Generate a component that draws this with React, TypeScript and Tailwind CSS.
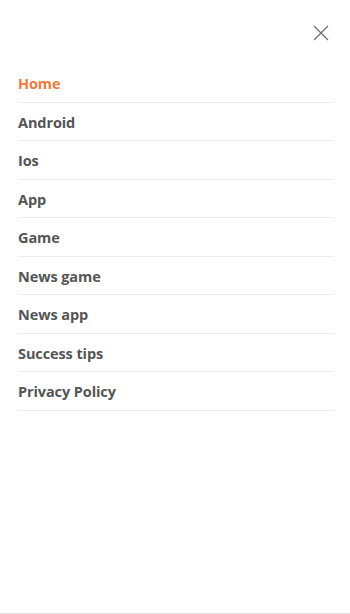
import React from "react";

const items = ["Home", "Android", "Ios", "App", "Game", "News game", "News app", "Success tips", "Privacy Policy"];

export default function App() {
  return (
    <div className="w-[350px] h-[614px] bg-white flex flex-col border-b border-[#dcdcdc] font-['Open_Sans',sans-serif]">
      <div className="flex justify-end pt-[25px] pr-[21px] h-[64px]">
        <button className="w-[16px] h-[16px] flex items-center justify-center" aria-label="close">
          <svg width="16" height="16" viewBox="0 0 16 16" fill="none" stroke="#6b6b6b" strokeWidth="1.2">
            <path d="M1 1 L15 15 M15 1 L1 15" />
          </svg>
        </button>
      </div>
      <ul className="pl-[18px] pr-[16px]">
        {items.map((t, i) => (
          <li
            key={t}
            className={`border-b border-[#ececec] pt-[9px] pb-[7px] leading-[21.5px] text-[14.5px] tracking-[-0.1px] font-bold ${
              i === 0 ? "text-[#ee7a3c]" : "text-[#555555]"
            }`}
          >
            {t}
          </li>
        ))}
      </ul>
    </div>
  );
}
